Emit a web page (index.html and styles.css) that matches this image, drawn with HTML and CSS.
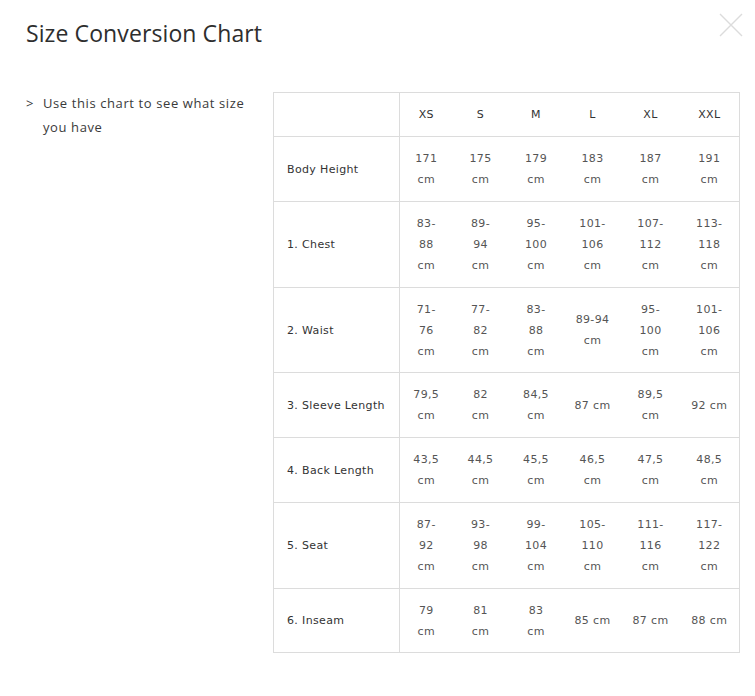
FILE: index.html
```html
<!DOCTYPE html>
<html lang="en">
<head>
<meta charset="utf-8">
<title>Size Conversion Chart</title>
<link rel="stylesheet" href="styles.css">
</head>
<body>
<div class="modal">
  <button class="close" aria-label="Close">
    <svg width="24" height="24" viewBox="0 0 24 24"><path d="M1 1 L23 23 M23 1 L1 23" stroke="#dcdcdc" stroke-width="1.4" fill="none"/></svg>
  </button>
  <h1 class="title">Size Conversion Chart</h1>
  <div class="content">
    <div class="intro">
      <span class="arrow">&gt;</span>
      <p class="intro-text">Use this chart to see what size you have</p>
    </div>
    <table class="chart">
      <colgroup>
        <col class="c-label"><col class="c-xs"><col class="c-s"><col class="c-m"><col class="c-l"><col class="c-xl"><col class="c-xxl">
      </colgroup>
      <thead>
        <tr><th></th><th>XS</th><th>S</th><th>M</th><th>L</th><th>XL</th><th>XXL</th></tr>
      </thead>
      <tbody>
        <tr><th>Body Height</th><td>171<br>cm</td><td>175<br>cm</td><td>179<br>cm</td><td>183<br>cm</td><td>187<br>cm</td><td>191<br>cm</td></tr>
        <tr><th>1. Chest</th><td>83-<br>88<br>cm</td><td>89-<br>94<br>cm</td><td>95-<br>100<br>cm</td><td>101-<br>106<br>cm</td><td>107-<br>112<br>cm</td><td>113-<br>118<br>cm</td></tr>
        <tr><th>2. Waist</th><td>71-<br>76<br>cm</td><td>77-<br>82<br>cm</td><td>83-<br>88<br>cm</td><td>89-94<br>cm</td><td>95-<br>100<br>cm</td><td>101-<br>106<br>cm</td></tr>
        <tr><th>3. Sleeve Length</th><td>79,5<br>cm</td><td>82<br>cm</td><td>84,5<br>cm</td><td>87 cm</td><td>89,5<br>cm</td><td>92 cm</td></tr>
        <tr><th>4. Back Length</th><td>43,5<br>cm</td><td>44,5<br>cm</td><td>45,5<br>cm</td><td>46,5<br>cm</td><td>47,5<br>cm</td><td>48,5<br>cm</td></tr>
        <tr><th>5. Seat</th><td>87-<br>92<br>cm</td><td>93-<br>98<br>cm</td><td>99-<br>104<br>cm</td><td>105-<br>110<br>cm</td><td>111-<br>116<br>cm</td><td>117-<br>122<br>cm</td></tr>
        <tr><th>6. Inseam</th><td>79<br>cm</td><td>81<br>cm</td><td>83<br>cm</td><td>85 cm</td><td>87 cm</td><td>88 cm</td></tr>
      </tbody>
    </table>
  </div>
</div>
</body>
</html>
```
FILE: styles.css
```css
* { box-sizing: border-box; }
html, body { margin: 0; padding: 0; background: #fff; }
body { width: 755px; height: 696px; overflow: hidden; }

.modal {
  position: relative;
  padding: 17px 15px 0 26px;
  color: #333;
}

.close {
  position: absolute;
  top: 13px;
  left: 719px;
  width: 24px;
  height: 24px;
  padding: 0;
  border: 0;
  background: none;
}
.close svg { display: block; }

.title {
  margin: 0;
  font-family: "Open Sans", sans-serif;
  font-weight: 400;
  font-size: 23px;
  line-height: 32px;
  color: #2e2e2e;
  letter-spacing: 0.1px;
}

.content {
  display: flex;
  margin-top: 43px;
}

.intro {
  display: flex;
  width: 248px;
  margin-top: -1px;
  font-family: "Open Sans", sans-serif;
  font-size: 13px;
  line-height: 24px;
  color: #3a3a3a;
  letter-spacing: 0.6px;
}
.arrow { width: 17px; flex: none; }
.intro-text { margin: 0; width: 215px; }

.chart {
  border-collapse: collapse;
  table-layout: fixed;
  width: 466px;
  align-self: flex-start;
  font-family: "DejaVu Sans", sans-serif;
  font-size: 11px;
  line-height: 21px;
  letter-spacing: 0.35px;
  color: #555;
  border: 1px solid #dcdcdc;
}
.c-label { width: 126px; }
.c-xs { width: 53px; }
.c-s { width: 56px; }
.c-m { width: 55px; }
.c-l { width: 58px; }
.c-xl { width: 58px; }
.c-xxl { width: 60px; }

.chart tr { border-top: 1px solid #dcdcdc; }
.chart th, .chart td {
  padding: 11px 0 10.75px;
  text-align: center;
  vertical-align: middle;
  font-weight: 400;
}
.chart thead th { color: #333; padding-bottom: 11px; }
.chart tbody th {
  text-align: left;
  padding-left: 13px;
  color: #333;
  border-right: 1px solid #dcdcdc;
}
.chart thead th:first-child { border-right: 1px solid #dcdcdc; }
```
